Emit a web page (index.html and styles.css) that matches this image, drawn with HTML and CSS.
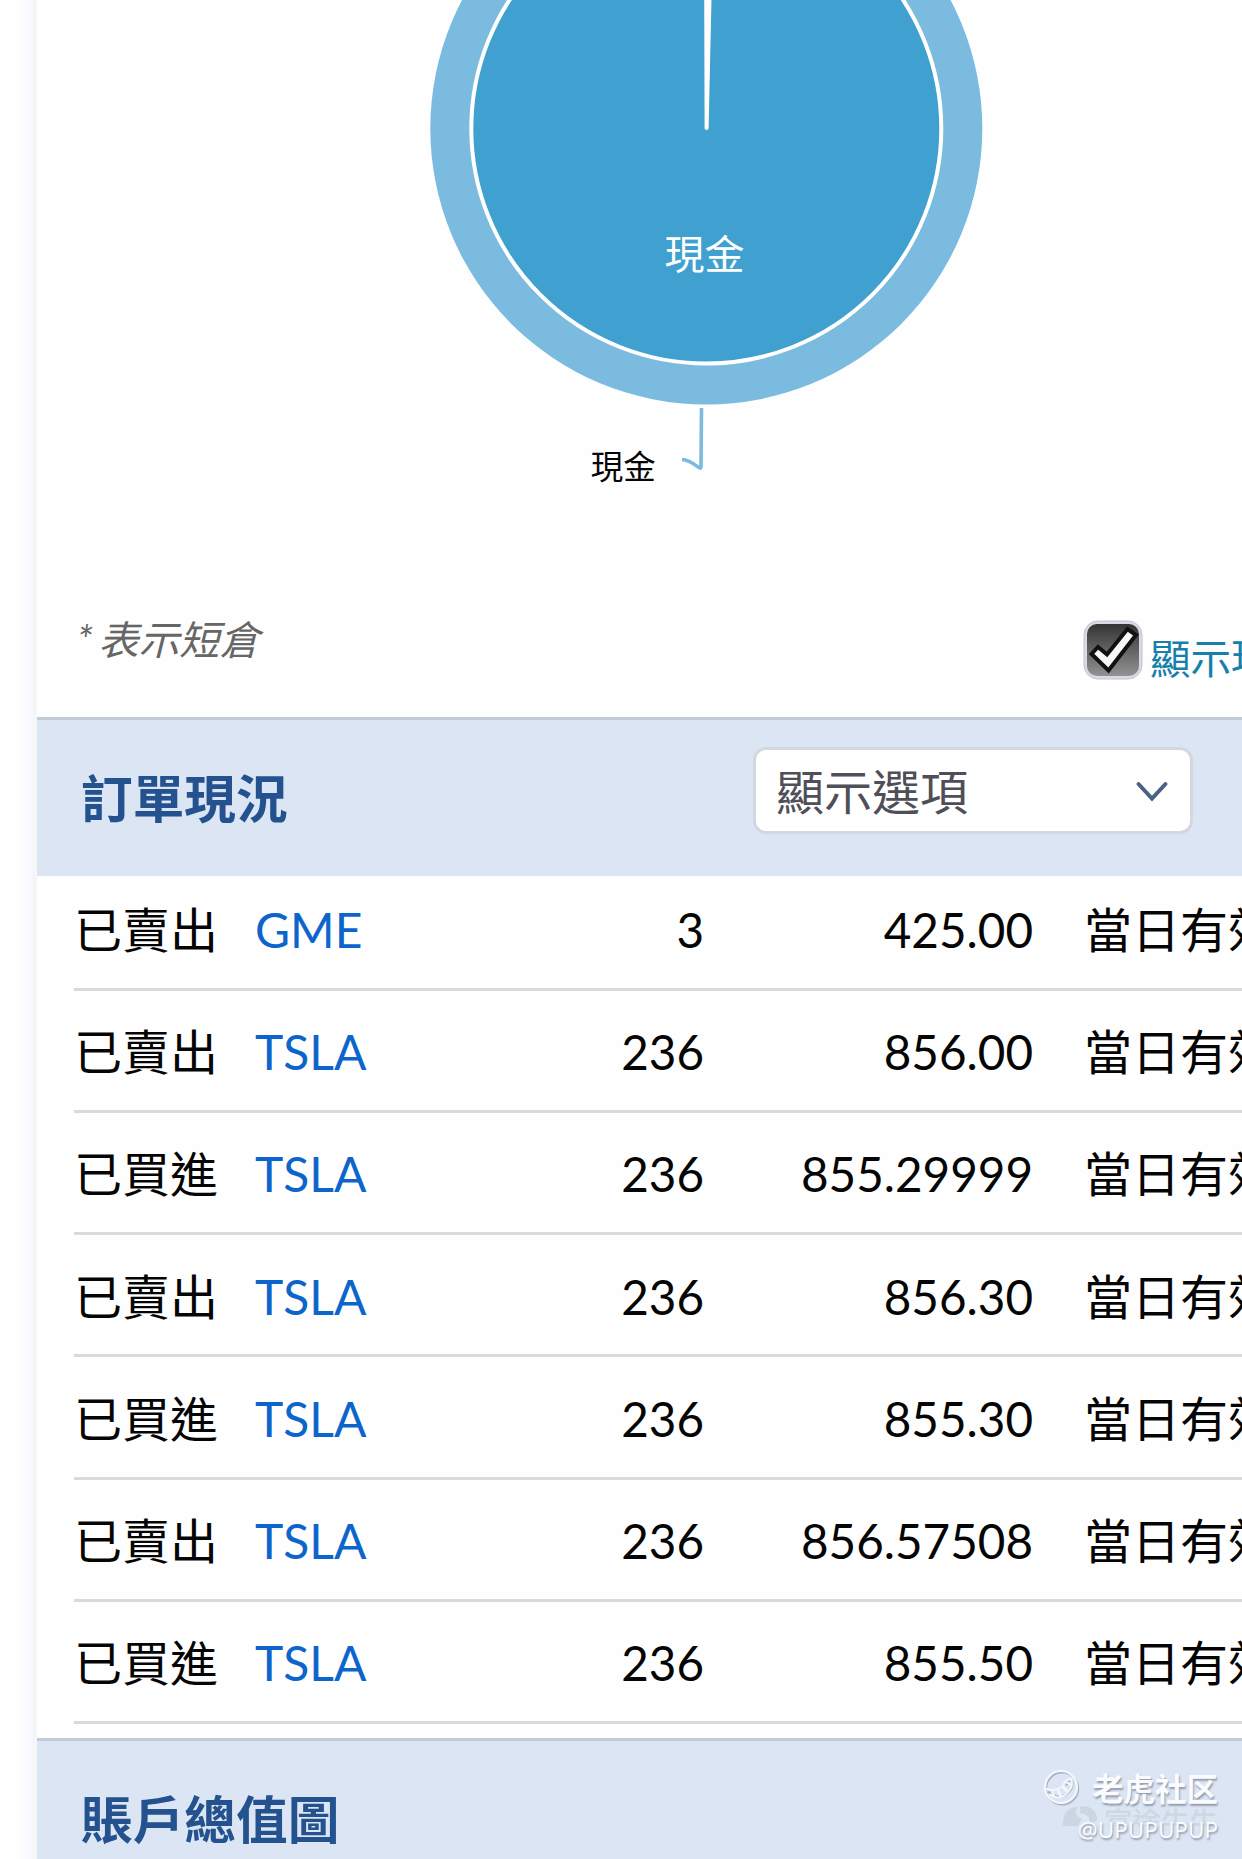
FILE: index.html
```html
<!DOCTYPE html>
<html lang="zh-Hant">
<head>
<meta charset="utf-8">
<title>訂單現況</title>
<link rel="stylesheet" href="styles.css">
</head>
<body>
<div class="page">
<main class="card">
  <section class="allocation">
    <svg class="chart" viewBox="37 0 1205 590" width="1205" height="590">
      <circle cx="706.3" cy="128.5" r="276" fill="#7abbdf"/>
      <circle cx="706.3" cy="128.5" r="235" fill="#40a0cf" stroke="#fff" stroke-width="4"/>
      <path d="M704.2 -10L704.6 128a2 2 0 0 0 4 0L711.7 -10Z" fill="#fff"/>
      <path d="M701.5 408L701 466C701 473 694 460 682 459.500" fill="none" stroke="#7abbdf" stroke-width="3.600"/>
      <text class="slice-label" x="704.500" y="269">現金</text>
      <text class="outer-label" x="590.800" y="479">現金</text>
    </svg>
    <div class="legend">
      <em class="note">* 表示短倉</em>
      <label class="toggle">
        <svg class="checkbox" viewBox="0 0 60 60" width="60" height="60">
          <defs><linearGradient id="box" x1="0" y1="0" x2="0" y2="1"><stop offset="0" stop-color="#343434"/><stop offset="1" stop-color="#929292"/></linearGradient></defs>
          <rect x="1" y="1" width="58" height="58" rx="14" fill="#d8dae5" stroke="#c3c4cb"/>
          <rect x="4" y="4" width="52" height="52" rx="10" fill="url(#box)"/>
          <path d="M8.500 34L15 27L24 34.500L44.500 9L53 15L25.500 50.500Z" fill="#f7f7f7" stroke="#111" stroke-width="4"/>
        </svg>
        <span class="toggle-text">顯示現金</span>
      </label>
    </div>
  </section>
  <header class="bar">
    <h2 class="title">訂單現況</h2>
    <div class="select">
      <span>顯示選項</span>
      <svg viewBox="0 0 34 22" width="34" height="22"><path d="M3.500 3L17 17.500L30.500 3" fill="none" stroke="#4c6185" stroke-width="4" stroke-linecap="round"/></svg>
    </div>
  </header>
  <div class="orders">
    <div class="row"><span>已賣出</span><a>GME</a><b>3</b><b>425.00</b><span class="tif">當日有效</span></div>
    <div class="row"><span>已賣出</span><a>TSLA</a><b>236</b><b>856.00</b><span class="tif">當日有效</span></div>
    <div class="row"><span>已買進</span><a>TSLA</a><b>236</b><b>855.29999</b><span class="tif">當日有效</span></div>
    <div class="row"><span>已賣出</span><a>TSLA</a><b>236</b><b>856.30</b><span class="tif">當日有效</span></div>
    <div class="row"><span>已買進</span><a>TSLA</a><b>236</b><b>855.30</b><span class="tif">當日有效</span></div>
    <div class="row"><span>已賣出</span><a>TSLA</a><b>236</b><b>856.57508</b><span class="tif">當日有效</span></div>
    <div class="row"><span>已買進</span><a>TSLA</a><b>236</b><b>855.50</b><span class="tif">當日有效</span></div>
  </div>
  <header class="bar">
    <h2 class="title">賬戶總值圖</h2>
  </header>
</main>
<div class="mark-under">
  <svg viewBox="0 0 36 22" width="36" height="22"><path d="M1 22C0 9 8 2 16 3C12 9 14 12 20 15L16 22ZM18 3C28 0 36 8 35 17L27 20C29 12 24 10 18 9Z" fill="#ccd5e1"/></svg>
  <span>富途牛牛</span>
</div>
<div class="mark">
  <div class="mark-brand">
    <svg class="mark-logo" viewBox="0 0 38 38" width="38" height="38">
      <g fill="none" stroke="#a9b2c4" transform="translate(1.200 1.500)"><circle cx="18" cy="18" r="16" stroke-width="2"/><path d="M4 21Q15 32 25 21Q29 17 28 11Q24 9 22 15" stroke-width="2.500"/></g>
      <g fill="none" stroke="#f4f7fc"><circle cx="18" cy="18" r="16" stroke-width="2.200"/><path d="M3 20Q13 23 20 17Q22 10 28 10Q31 17 25 23Q17 33 6 25" stroke-width="2"/><path d="M9 22L11 28M15 21L18 28M20 18L25 23M23 13L29 16" stroke-width="2.500"/></g>
    </svg>
    <span>老虎社区</span>
  </div>
  <div class="mark-user">@UPUPUPUP</div>
</div>
</div>
</body>
</html>
```
FILE: styles.css
```css
* { box-sizing: border-box; }
body {
  margin: 0;
  background: #fff;
  color: #050505;
  font-family: Lato, "Noto Sans CJK TC", sans-serif;
}
.page {
  position: relative;
  width: 1242px;
  height: 1859px;
  overflow: hidden;
  padding-left: 37px;
  background: linear-gradient(90deg, #fff 16px, #f9f9fe 32px, #f4f5f8 33px, #f6f7f9 37px, #fefefe 37px);
}
.card { width: 1205px; overflow: hidden; background: #fefefe; }
.allocation { height: 716.500px; }
.chart { display: block; }
.slice-label { fill: #fff; font-size: 40px; text-anchor: middle; }
.outer-label { fill: #050505; font-size: 32.500px; }
.legend {
  display: flex;
  justify-content: space-between;
  padding: 30px 0 0 40px;
  white-space: nowrap;
}
.note { color: #666; font-size: 40.300px; line-height: 40px; word-spacing: -4px; }
.toggle { display: flex; gap: 7px; width: 159px; }
.checkbox { flex: none; }
.toggle-text { color: #1680ab; font-size: 40.500px; line-height: 40px; padding-top: 19px; }
.bar {
  display: flex;
  align-items: flex-start;
  height: 159px;
  padding-left: 44px;
  border-top: 3.500px solid #c2cbd5;
  background: #dbe5f3;
}
.title {
  width: 672px;
  margin: 0;
  padding-top: 48px;
  color: #23528f;
  font-size: 51.700px;
  font-weight: 700;
  line-height: 60px;
}
.select {
  display: flex;
  align-items: center;
  justify-content: space-between;
  width: 440px;
  height: 87px;
  margin-top: 27px;
  padding: 4px 21px 0 20px;
  border: 3px solid #d5d7e0;
  border-radius: 13px;
  background: #fff;
  color: #4f4f59;
  font-size: 48px;
  line-height: 62px;
}
.orders { height: 862px; padding-left: 37px; }
.row {
  display: grid;
  grid-template-columns: 181px 238px 211px 329px 300px;
  align-items: end;
  height: 122.140px;
  padding-bottom: 27.800px;
  border-bottom: 3px solid #dadada;
  font-size: 48px;
  line-height: 60px;
  white-space: nowrap;
}
.row:first-child { height: 115.500px; }
.row a { color: #0d65cc; }
.row b { font-size: 47.600px; font-weight: 400; text-align: right; }
.tif { padding-left: 51px; }
.mark, .mark-under { position: absolute; right: 24px; color: #f9fbfe; white-space: nowrap; }
.mark { top: 1766px; text-align: right; text-shadow: 1px 2px 2px #929bad; }
.mark-brand {
  display: flex;
  align-items: center;
  gap: 11px;
  font-family: "Noto Sans CJK SC", sans-serif;
  font-size: 31.500px;
  font-weight: 700;
  line-height: 38px;
}
.mark-logo { margin-top: 3px; }
.mark-user { padding-top: 8px; font-family: "Noto Sans", sans-serif; font-size: 22.500px; line-height: 30px; }
.mark-under {
  display: flex;
  gap: 6px;
  top: 1804px;
  height: 22px;
  overflow: hidden;
  color: #ced7e3;
  font-size: 28.500px;
  font-weight: 500;
  line-height: 36px;
}
```
